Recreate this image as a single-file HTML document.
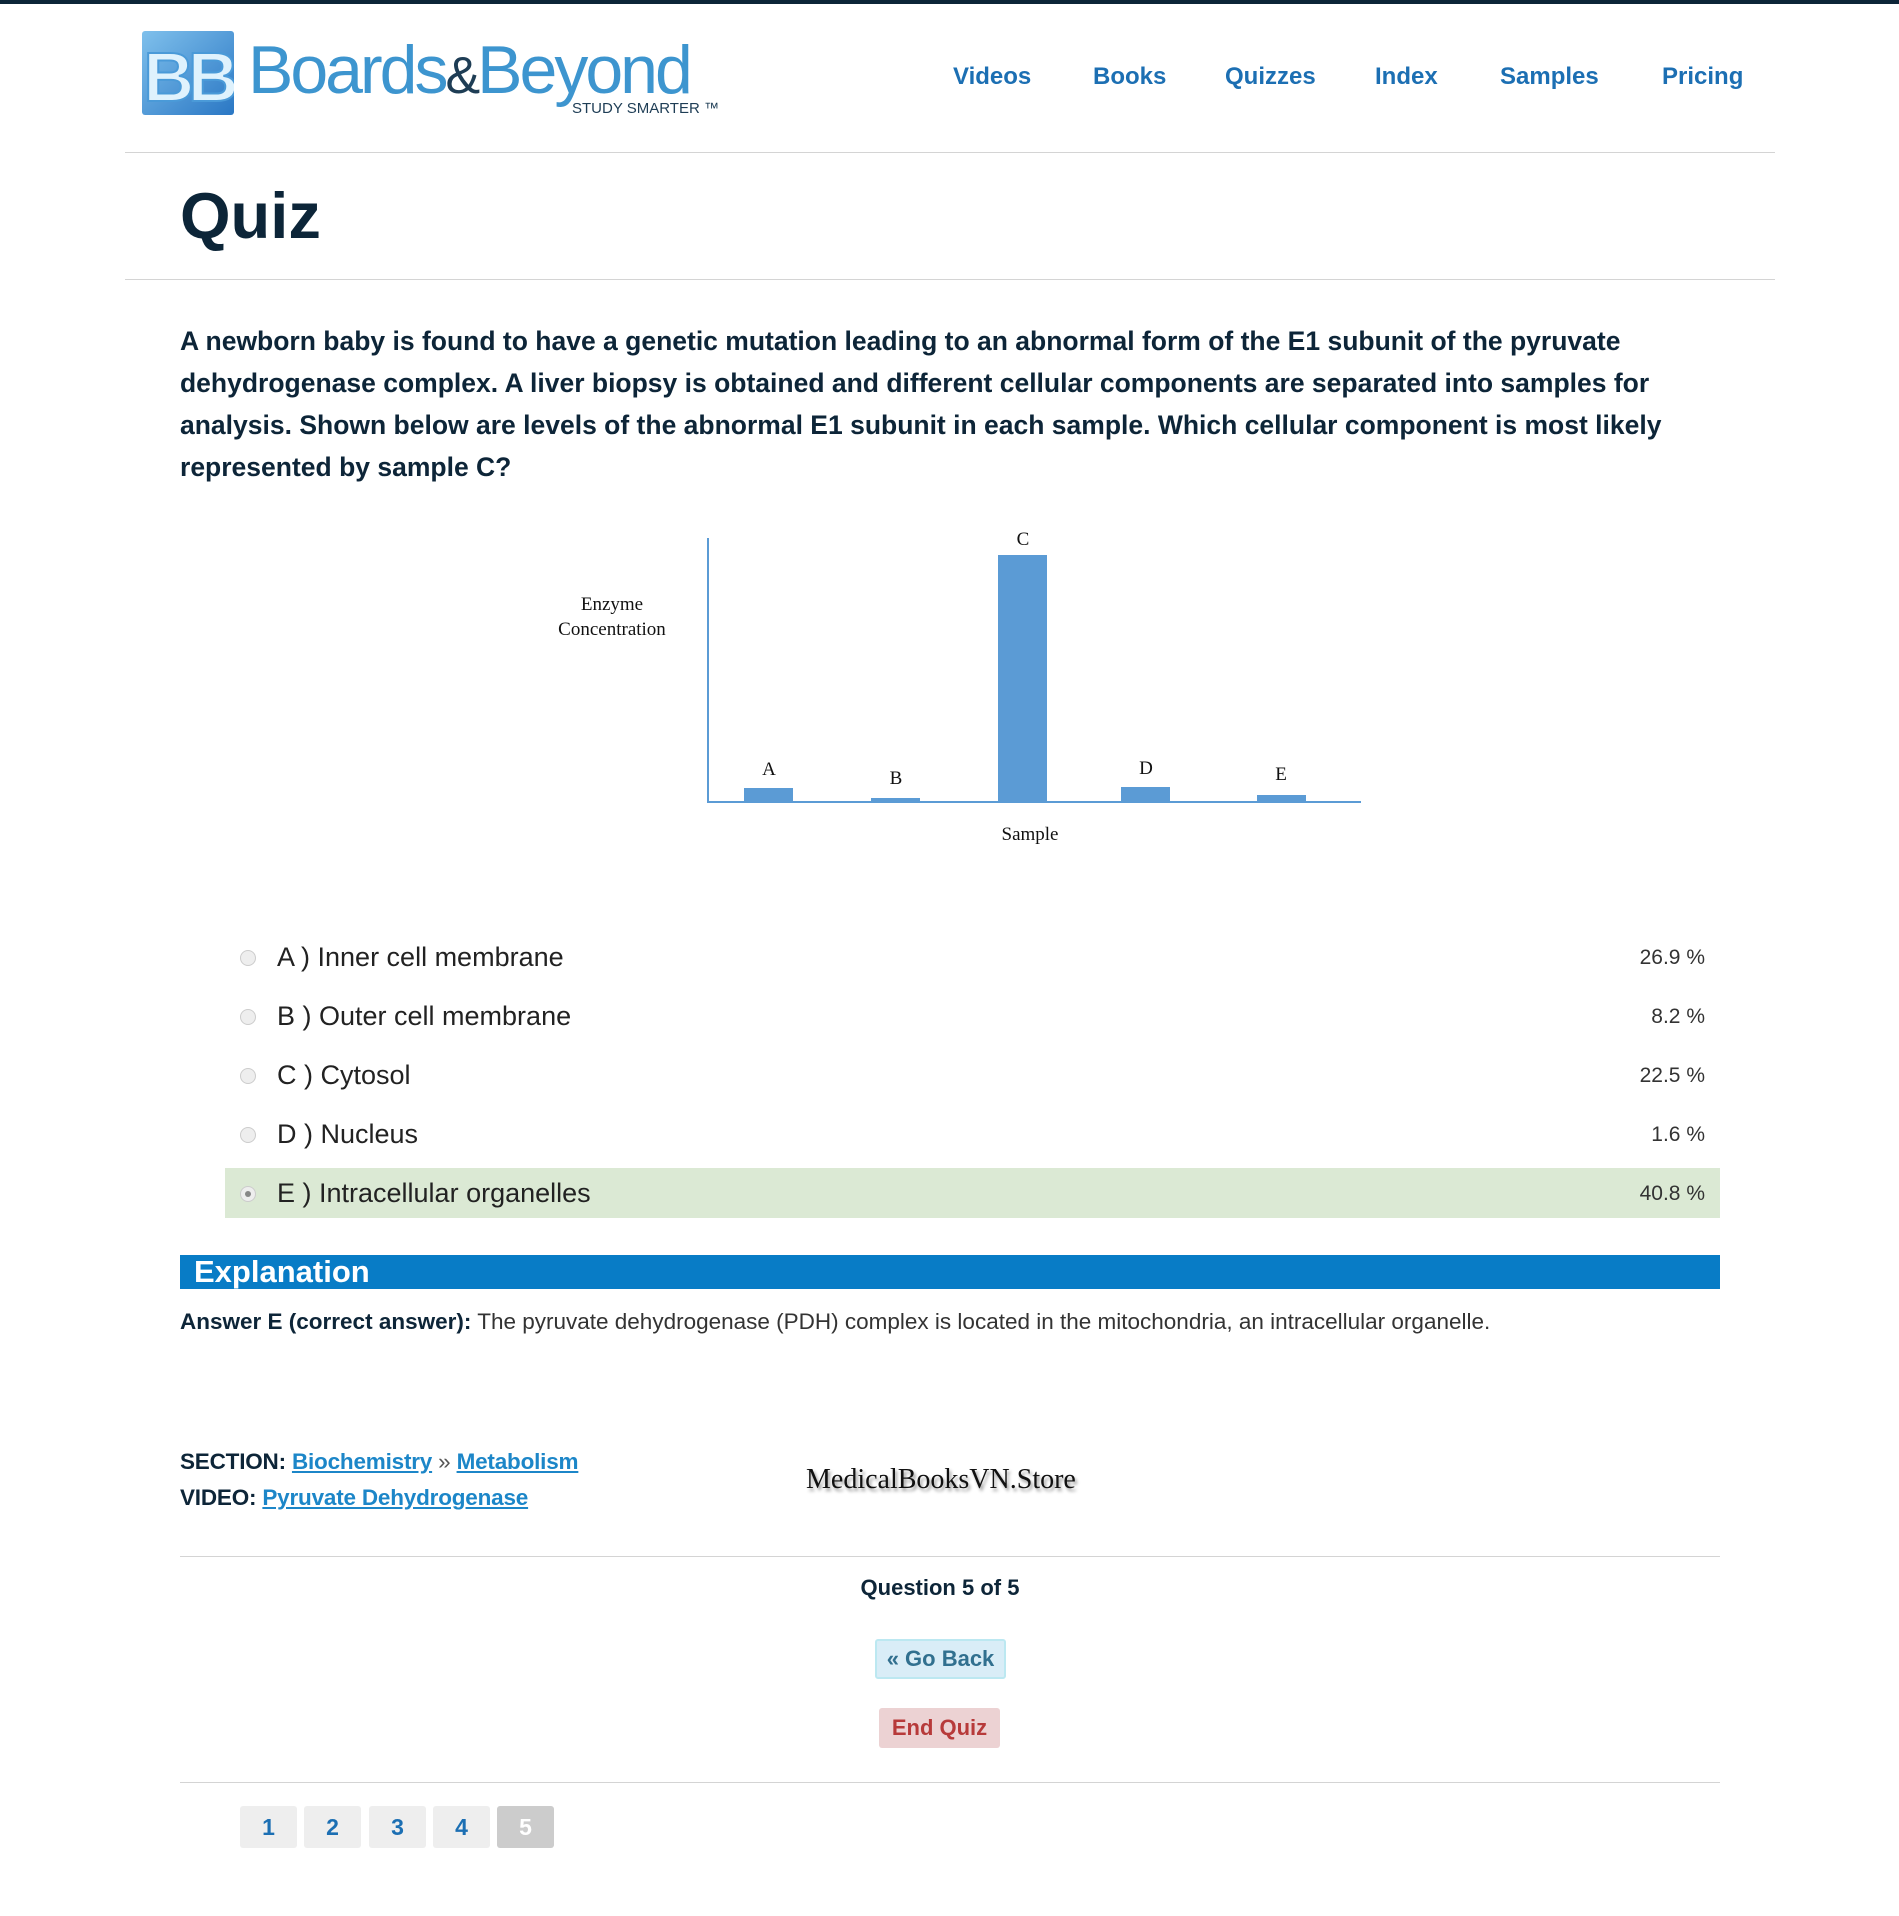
<!DOCTYPE html>
<html><head><meta charset="utf-8"><style>
body{margin:0;background:#fff;font-family:"Liberation Sans",sans-serif;color:#0d2538;width:1899px;height:1916px;position:relative;overflow:hidden}
.a{position:absolute}
.top{left:0;top:0;width:1899px;height:4px;background:#0c2538}
.nav a{position:absolute;top:63px;font-size:24px;font-weight:bold;color:#1c6fb3;text-decoration:none}
.hr{position:absolute;height:1px;background:#d4d4d4}
.q{left:180px;top:320px;width:1515px;font-size:26.5px;font-weight:bold;line-height:42px;letter-spacing:0}
.opt{position:absolute;left:225px;width:1495px;height:50px;font-size:27px;color:#222}
.opt .r{position:absolute;left:15px;top:18px;width:14px;height:14px;border-radius:50%;background:#eee;border:1px solid #ccc}
.opt .t{position:absolute;left:52px;top:10px}
.opt .p{position:absolute;right:15px;top:14px;font-size:21px;color:#333}
.btn{position:absolute;font-size:22px;font-weight:bold;text-align:center;border-radius:3px}
.pg{position:absolute;top:1806px;width:57px;height:42px;background:#eee;border-radius:3px;color:#1c6fb3;font-weight:bold;font-size:23px;text-align:center;line-height:42px}
</style></head><body>
<div class="a top"></div>
<svg class="a" style="left:142px;top:31px" width="92" height="84"><defs><linearGradient id="g" x1="0" y1="0" x2="1" y2="1"><stop offset="0" stop-color="#7fc0ec"/><stop offset="1" stop-color="#2a77c4"/></linearGradient></defs><rect width="92" height="84" rx="3" fill="url(#g)"/><text x="46" y="70" text-anchor="middle" font-family="Liberation Sans" font-weight="bold" font-size="70" fill="#dff2fd" stroke="#4a9ad8" stroke-width="2" letter-spacing="-6">BB</text></svg>
<div class="a" style="left:248px;top:31px;font-size:68px;color:#3d95cf;letter-spacing:-3px;white-space:nowrap">Boards<span style="color:#1e3d55;font-size:52px">&amp;</span>Beyond</div>
<div class="a" style="left:572px;top:100px;font-size:15px;color:#1e3d55;white-space:nowrap">STUDY SMARTER ™</div>
<div class="nav"><a style="left:953px">Videos</a><a style="left:1093px">Books</a><a style="left:1225px">Quizzes</a><a style="left:1375px">Index</a><a style="left:1500px">Samples</a><a style="left:1662px">Pricing</a></div>
<div class="hr" style="left:125px;top:152px;width:1650px"></div>
<div class="a" style="left:180px;top:178px;font-size:65px;font-weight:bold;color:#0c2538">Quiz</div>
<div class="hr" style="left:125px;top:279px;width:1650px"></div>
<div class="a q">A newborn baby is found to have a genetic mutation leading to an abnormal form of the E1 subunit of the pyruvate dehydrogenase complex. A liver biopsy is obtained and different cellular components are separated into samples for analysis. Shown below are levels of the abnormal E1 subunit in each sample. Which cellular component is most likely represented by sample C?</div>
<svg class="a" style="left:0;top:0" width="1899" height="900" font-family="Liberation Serif" font-size="19" fill="#111">
<line x1="708" y1="538" x2="708" y2="802" stroke="#5b9bd5" stroke-width="2"/>
<line x1="707" y1="802" x2="1361" y2="802" stroke="#5b9bd5" stroke-width="2"/>
<g fill="#5b9bd5"><rect x="744" y="788" width="49" height="14"/><rect x="871" y="798" width="49" height="4"/><rect x="998" y="555" width="49" height="247"/><rect x="1121" y="787" width="49" height="15"/><rect x="1257" y="795" width="49" height="7"/></g>
<g text-anchor="middle"><text x="769" y="775">A</text><text x="896" y="784">B</text><text x="1023" y="545">C</text><text x="1146" y="774">D</text><text x="1281" y="780">E</text>
<text x="612" y="610">Enzyme</text><text x="612" y="635">Concentration</text><text x="1030" y="840">Sample</text></g>
</svg>
<div class="opt" style="top:932px"><div class="r"></div><div class="t">A ) Inner cell membrane</div><div class="p">26.9 %</div></div>
<div class="opt" style="top:991px"><div class="r"></div><div class="t">B ) Outer cell membrane</div><div class="p">8.2 %</div></div>
<div class="opt" style="top:1050px"><div class="r"></div><div class="t">C ) Cytosol</div><div class="p">22.5 %</div></div>
<div class="opt" style="top:1109px"><div class="r"></div><div class="t">D ) Nucleus</div><div class="p">1.6 %</div></div>
<div class="opt" style="top:1168px;background:#dbe9d4"><div class="r"><div style="width:6px;height:6px;border-radius:50%;background:#888;margin:4px"></div></div><div class="t">E ) Intracellular organelles</div><div class="p">40.8 %</div></div>
<div class="a" style="left:180px;top:1255px;width:1540px;height:34px;background:#087cc6;color:#fff;font-size:31px;font-weight:bold;line-height:34px"><span style="padding-left:14px">Explanation</span></div>
<div class="a" style="left:180px;top:1309px;font-size:22.5px;color:#333;white-space:nowrap"><b style="color:#0d2538">Answer E (correct answer):</b> The pyruvate dehydrogenase (PDH) complex is located in the mitochondria, an intracellular organelle.</div>
<div class="a" style="left:180px;top:1444px;font-size:22.5px;font-weight:bold;line-height:36px;letter-spacing:-0.2px">SECTION: <u style="color:#1c86c8">Biochemistry</u> <span style="font-weight:normal;color:#555">»</span> <u style="color:#1c86c8">Metabolism</u><br>VIDEO: <u style="color:#1c86c8">Pyruvate Dehydrogenase</u></div>
<div class="a" style="left:806px;top:1464px;font-family:'Liberation Serif',serif;font-size:28px;color:#111;text-shadow:2px 3px 3px #999">MedicalBooksVN.Store</div>
<div class="hr" style="left:180px;top:1556px;width:1540px"></div>
<div class="a" style="left:800px;width:280px;top:1575px;text-align:center;font-size:22px;font-weight:bold">Question 5 of 5</div>
<div class="btn" style="left:875px;top:1639px;width:127px;height:36px;line-height:36px;background:#d9edf7;border:2px solid #bce8f1;color:#31708f">« Go Back</div>
<div class="btn" style="left:879px;top:1708px;width:121px;height:40px;line-height:40px;background:#ecd2d3;color:#b73a3a">End Quiz</div>
<div class="hr" style="left:180px;top:1782px;width:1540px"></div>
<div class="pg" style="left:240px">1</div><div class="pg" style="left:304px">2</div><div class="pg" style="left:369px">3</div><div class="pg" style="left:433px">4</div><div class="pg" style="left:497px;background:#ccc;color:#fff">5</div>
</body></html>
